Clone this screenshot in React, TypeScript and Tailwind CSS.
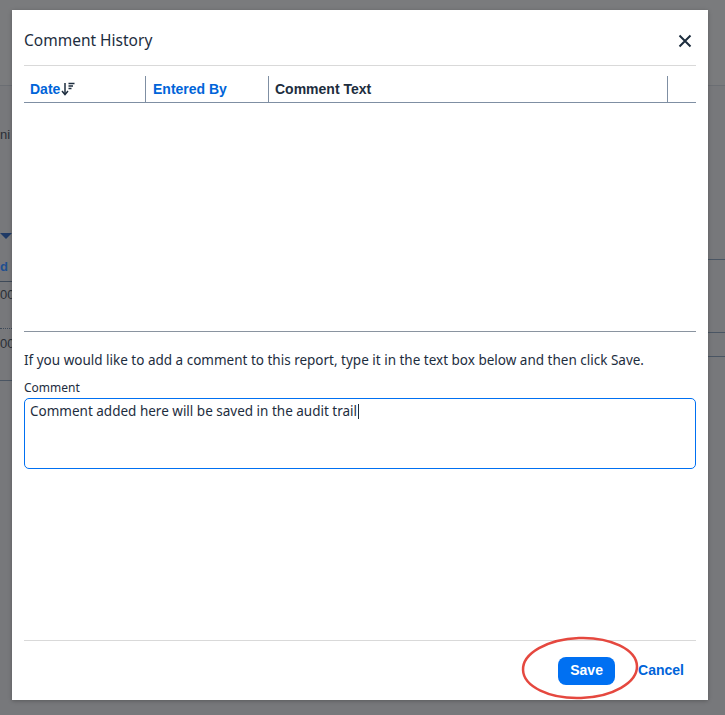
import React from "react";

const font = { fontFamily: '"Liberation Sans", Arial, sans-serif' };
const body = { fontFamily: '"Noto Sans", "Liberation Sans", Arial, sans-serif' };

function SortIcon() {
  return (
    <svg width="14" height="14" viewBox="0 0 14 14" className="ml-[1px]">
      <path d="M4 1v11" stroke="#1d2d3e" strokeWidth="1.5" />
      <path d="M1 9l3 3.5L7 9" stroke="#1d2d3e" strokeWidth="1.5" fill="none" />
      <path d="M7.5 1.5h6M7.5 4h4.5M7.5 6.5h3" stroke="#1d2d3e" strokeWidth="1.3" />
    </svg>
  );
}

function CloseIcon() {
  return (
    <svg width="14" height="14" viewBox="0 0 14 14">
      <path d="M1.5 1.5l11 11M12.5 1.5l-11 11" stroke="#1d2d3e" strokeWidth="2" />
    </svg>
  );
}

function BackgroundPage() {
  return (
    <div className="flex h-[715px] w-[725px] flex-col bg-[#77787b]">
      <div className="h-[86px] border-b border-[#6b6e73] bg-[#7a7b7d]" />
      <div className="flex flex-1 justify-between">
        <div className="flex w-[12px] flex-col text-[13px] text-[#2a2f36]">
          <div className="mt-[42px] leading-none">ni</div>
          <div className="mt-[92px] h-0 w-0 border-x-[6px] border-t-[6px] border-x-transparent border-t-[#1f3a66]" />
          <div className="mt-[18px] border-b border-[#3e4a59] pb-[4px] font-bold text-[#1f4f8f]">d</div>
          <div className="mt-[3px]">00</div>
          <div className="mt-[24px] border-b border-dotted border-[#3e4a59]" />
          <div className="mt-[5px]">00</div>
          <div className="mt-[26px] border-b border-[#4a5563]" />
        </div>
        <div className="flex w-[17px] flex-col">
          <div className="mt-[173px] border-b border-[#4a5563]" />
          <div className="mt-[72px] border-b border-[#4a5563]" />
          <div className="mt-[23px] border-b border-[#4a5563]" />
        </div>
      </div>
    </div>
  );
}

export default function App() {
  return (
    <div className="relative h-[715px] w-[725px] overflow-hidden" style={font}>
      <BackgroundPage />

      <div className="absolute left-[12px] top-[10px] flex h-[690px] w-[696px] flex-col bg-white px-[12px] shadow-[0_1px_4px_rgba(0,0,0,0.25)]">
        {/* Header */}
        <div className="flex h-[55px] items-center justify-between pt-[7px]">
          <h1 className="text-[15.5px] text-[#1d2d3e]" style={body}>
            Comment History
          </h1>
          <button className="mr-[1px] flex h-[20px] w-[20px] items-center justify-center">
            <CloseIcon />
          </button>
        </div>
        <div className="h-px bg-[#d9d9d9]" />

        {/* Table */}
        <div className="mt-[10px] flex h-[27px] border-b border-[#7f8fa3] text-[14px] font-bold">
          <div className="flex w-[121px] items-center pl-[6px] text-[#0064d9]">
            Date
            <SortIcon />
          </div>
          <div className="flex w-[123px] items-center border-l border-[#7f8fa3] pl-[7px] text-[#0064d9]">
            Entered By
          </div>
          <div className="flex w-[399px] items-center border-l border-[#7f8fa3] pl-[6px] text-[#1d2d3e]">
            Comment Text
          </div>
          <div className="flex-1 border-l border-[#7f8fa3]" />
        </div>
        <div className="h-[229px] border-b border-[#8a94a0]" />

        {/* Comment entry */}
        <div className="flex flex-col" style={body}>
          <p className="mt-[19px] text-[13.5px] leading-[18px] text-[#1d2d3e]">
            If you would like to add a comment to this report, type it in the text box below and then click Save.
          </p>
          <label className="mt-[12px] text-[12px] leading-[14px] text-[#1d2d3e]">Comment</label>
          <div className="mt-[3px] h-[71px] rounded-[5px] border border-[#0070f2] px-[5px] py-[2px] text-[13.5px] leading-[19px] text-[#1d2d3e]">
            Comment added here will be saved in the audit trail
            <span className="ml-[1px] inline-block h-[15px] w-px translate-y-[3px] bg-[#1d2d3e]" />
          </div>
        </div>

        <div className="flex-1" />

        {/* Footer */}
        <div className="h-px bg-[#d9d9d9]" />
        <div className="flex h-[59px] items-center justify-end gap-[23px] pr-[12px]">
          <button className="h-[28px] w-[57px] rounded-[8px] bg-[#0070f2] text-[14px] font-bold text-white">
            Save
          </button>
          <button className="text-[14px] font-bold text-[#0064d9]">Cancel</button>
        </div>
      </div>

      {/* annotation ring round Save */}
      <svg className="absolute left-[520px] top-[634px]" width="120" height="68" viewBox="0 0 120 68">
        <ellipse cx="60" cy="34" rx="57" ry="30" fill="none" stroke="#e5483f" strokeWidth="2.5" transform="rotate(-2 60 34)" />
      </svg>
    </div>
  );
}
